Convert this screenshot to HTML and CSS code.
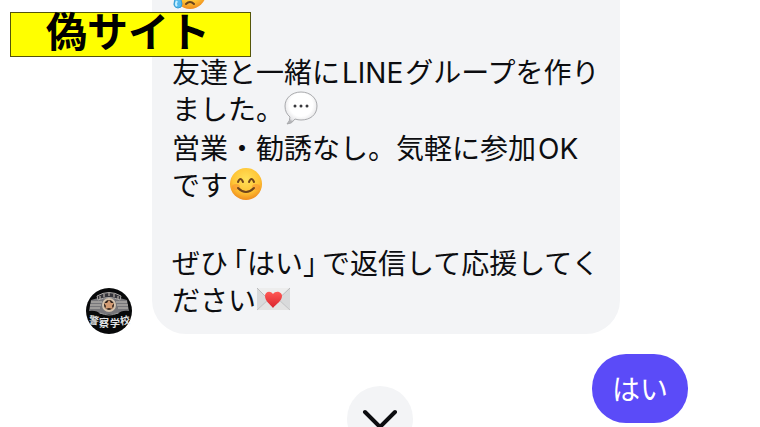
FILE: index.html
```html
<!DOCTYPE html>
<html lang="ja">
<head>
    <meta charset="UTF-8">
    <meta name="viewport" content="width=device-width, initial-scale=1.0">
    <title>メッセージ</title>
    <link rel="stylesheet" href="styles.css">
</head>
<body>
    <h1 class="banner">偽サイト</h1>

    <main class="chat">
        <div class="row incoming">
            <svg class="avatar" viewBox="0 0 46 46" role="img" aria-label="警察学校">
                <circle cx="23" cy="23" r="23" fill="#08090a"/>
                <path d="M5 12Q23 5 41 12L43 23Q35 22 32 26H14Q11 22 3 23Z" fill="#77767a"/>
                <path d="M11 8Q23 1 35 8L34 12Q23 7 12 12Z" fill="#34343a" stroke="#b0adab"/>
                <path d="M5 14H16M4 17H15M4 20H14M30 14H41M31 17H42M32 20H42" stroke="#c6c1bb"/>
                <path d="M14 8v3M18 6v3M23 5v3M28 6v3M32 8v3" stroke="#d3c9be"/>
                <circle cx="23" cy="17" r="6" fill="#35251e" stroke="#d5c3ad" stroke-width="2"/>
                <path d="M23 12l2 3 3 0-2 3 1 3-4-1-4 1 1-3-2-3 3 0Z" fill="#d39b73"/>
                <path d="M14 25Q23 29 32 25" fill="none" stroke="#999"/>
                <g class="avatar-text">
                    <text x="3" y="36" transform="rotate(8 8 32)">警</text>
                    <text x="13" y="39">察</text>
                    <text x="24" y="39">学</text>
                    <text x="34" y="36" transform="rotate(-8 39 32)">校</text>
                </g>
            </svg>
            <div class="bubble">
                <p>
                    <svg class="emoji" viewBox="0 0 34 34" role="img" aria-label="冷や汗">
                        <circle cx="18" cy="17" r="16" fill="url(#face)"/>
                        <circle cx="12" cy="17" r="2" fill="#69431c"/>
                        <circle cx="24" cy="17" r="2" fill="#69431c"/>
                        <path d="M14 28Q18 24 22 28" fill="none" stroke="#69431c" stroke-width="2" stroke-linecap="round"/>
                        <path d="M6 19Q1 25 2 29Q3 32 6 32Q10 32 10 28Q10 24 6 19Z" fill="#55b9ed" stroke="#359bd3"/>
                        <path d="M5 25Q3 28 5 30" fill="none" stroke="#c8f0ff" stroke-width="2"/>
                    </svg>
                </p>
                <p><br></p>
                <p>友達と一緒に<span class="latin">LINE</span>グループを作り<br>ました。<svg class="emoji" viewBox="0 0 34 34" role="img" aria-label="吹き出し">
                        <defs>
                            <radialGradient id="balloon" cx=".5" cy=".4" r=".6">
                                <stop offset=".6" stop-color="#fff"/>
                                <stop offset=".9" stop-color="#e5e5e7"/>
                                <stop offset="1" stop-color="#b5b6b9"/>
                            </radialGradient>
                            <radialGradient id="face" cx=".5" cy=".35" r=".65">
                                <stop offset="0" stop-color="#ffe15a"/>
                                <stop offset=".65" stop-color="#ffc435"/>
                                <stop offset="1" stop-color="#ef8c1d"/>
                            </radialGradient>
                            <linearGradient id="heart" x2="0" y2="1">
                                <stop offset="0" stop-color="#ff5a55"/>
                                <stop offset="1" stop-color="#d9222c"/>
                            </linearGradient>
                        </defs>
                        <path d="M17 1C26 1 33 7 33 15C33 24 26 29 17 29Q14 29 11 28Q8 33 3 33Q6 30 6 26Q1 22 1 15C1 7 8 1 17 1Z" fill="url(#balloon)" stroke="#a9aaad"/>
                        <g fill="#38383b">
                            <circle cx="11" cy="15" r="1.5"/>
                            <circle cx="17" cy="15" r="1.5"/>
                            <circle cx="23" cy="15" r="1.5"/>
                        </g>
                    </svg></p>
                <p>営業・勧誘なし。気軽に参加<span class="latin">OK</span><br>です<svg class="emoji" viewBox="0 0 34 34" role="img" aria-label="笑顔">
                        <circle cx="18" cy="17" r="16" fill="url(#face)"/>
                        <ellipse cx="8" cy="20" rx="4" ry="3" fill="#f98a32" opacity=".5"/>
                        <ellipse cx="28" cy="20" rx="4" ry="3" fill="#f98a32" opacity=".5"/>
                        <path d="M10 15Q12.500 9 15 15M21 15Q23.500 9 26 15" fill="none" stroke="#70441b" stroke-width="2" stroke-linecap="round"/>
                        <path d="M10 21Q18 29 26 21" fill="none" stroke="#70441b" stroke-width="2" stroke-linecap="round"/>
                    </svg></p>
                <p><br></p>
                <p>ぜひ<span class="quote">「はい」</span>で返信して応援してく<br>ださい<svg class="emoji" viewBox="0 0 34 34" role="img" aria-label="ラブレター">
                        <path d="M1 6H34V28H1Z" fill="#e3e3e3"/>
                        <path d="M1 6L13 18L1 28ZM34 6L22 18L34 28Z" fill="#d9dadb"/>
                        <path d="M1 28L13 17M34 28L22 17" stroke="#c5c5c6"/>
                        <path d="M1 6L17 22L34 6" fill="#ededed" stroke="#b9babc"/>
                        <path d="M17 26C14 22 9 19 9 14C9 10 14 8 17 12C20 8 26 10 26 14C26 19 20 22 17 26Z" fill="url(#heart)"/>
                    </svg></p>
            </div>
        </div>
        <div class="row outgoing">
            <div class="bubble">はい</div>
        </div>
    </main>

    <button class="scroll-button" type="button" aria-label="一番下へ">
        <svg viewBox="0 0 66 66" aria-hidden="true">
            <path d="M18 26L33 41L48 26" fill="none" stroke="#0c0d10" stroke-width="4" stroke-linecap="round" stroke-linejoin="round"/>
        </svg>
    </button>
</body>
</html>
```
FILE: styles.css
```css
* {
    box-sizing: border-box;
}
html {
    overflow: hidden;
}
body {
    position: relative;
    height: 100vh;
    margin: 0;
    overflow: hidden;
    background-color: #FFFFFF;
    color: #0c0d10;
    font-family: "Noto Sans CJK JP", sans-serif;
    font-size: 28px;
    line-height: 37px;
}
.banner {
    position: absolute;
    top: 12px;
    left: 10px;
    z-index: 1;
    margin: 0;
    padding: 0 40px 10px 35px;
    border: 1px solid #55550a;
    background-color: #ffff00;
    color: #000000;
    font-size: 41px;
    font-weight: bold;
    line-height: 33px;
}
.chat {
    display: flex;
    flex-direction: column;
    justify-content: flex-end;
    gap: 20px;
    height: 100%;
    padding: 0 72px 4px 86px;
}
.row {
    display: flex;
    align-items: flex-end;
    gap: 20px;
}
.outgoing {
    justify-content: flex-end;
}
.avatar {
    flex: none;
    width: 46px;
    height: 46px;
}
.avatar-text {
    fill: #e4e6e8;
    font-size: 10px;
    font-weight: bold;
}
.bubble {
    border-radius: 34px;
    white-space: nowrap;
}
.incoming .bubble {
    padding: 16px 20px;
    background-color: #f3f4f6;
}
.outgoing .bubble {
    padding: 16px 20px;
    background-color: #5b4bf8;
    color: #FFFFFF;
}
.bubble p {
    margin: 0 0 2px;
}
.bubble p:last-child {
    margin-bottom: 0;
}
.latin {
    margin: 0 2px;
    font-family: Inter, sans-serif;
    line-height: 1;
}
.quote {
    margin: 0 5px;
    font-feature-settings: "halt";
}
.emoji {
    width: 34px;
    height: 34px;
    margin: -10px 0 -2px;
    vertical-align: middle;
}
.scroll-button {
    position: absolute;
    bottom: -25px;
    left: 50%;
    width: 66px;
    height: 66px;
    padding: 0;
    border: none;
    border-radius: 50%;
    background-color: #f3f4f6;
    transform: translateX(-50%);
    cursor: pointer;
}
.scroll-button svg {
    display: block;
}
```
